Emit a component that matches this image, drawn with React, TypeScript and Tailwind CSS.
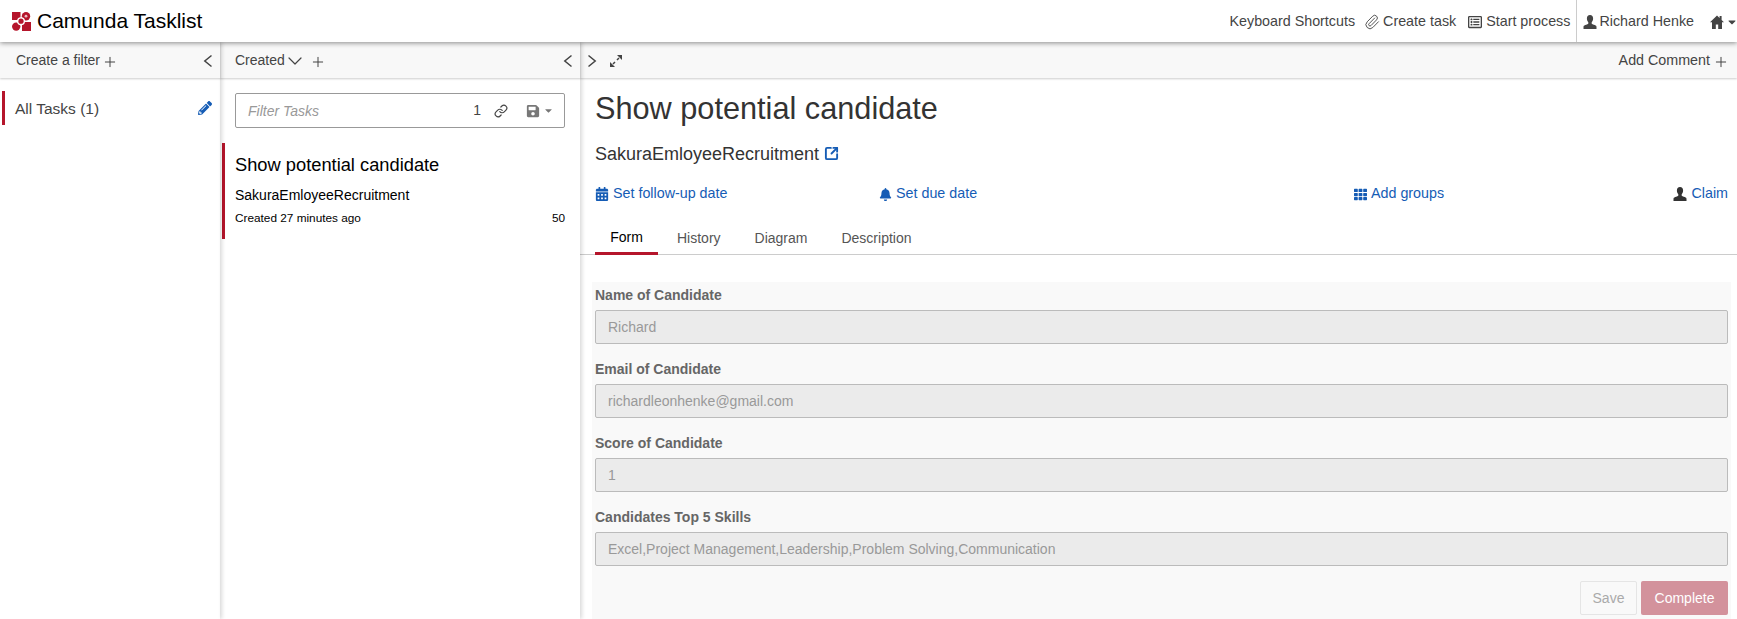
import { ChevronDown, Link, Paperclip, Plus, SquareArrowOutUpRight } from 'lucide-react'
import { FaBell, FaCalendarAlt, FaCaretDown, FaPencilAlt, FaRegListAlt, FaSave, FaTh } from 'react-icons/fa'

const fields = [
  { label: 'Name of Candidate', value: 'Richard' },
  { label: 'Email of Candidate', value: 'richardleonhenke@gmail.com' },
  { label: 'Score of Candidate', value: '1' },
  { label: 'Candidates Top 5 Skills', value: 'Excel,Project Management,Leadership,Problem Solving,Communication' },
]

function Logo() {
  return (
    <svg width="19" height="19" viewBox="0 0 19 19" className="shrink-0">
      <path d="M0 0 H8.5 V8 H0 Z" fill="#b5152b" />
      <circle cx="14" cy="4.2" r="4.2" fill="#b5152b" />
      <circle cx="14" cy="4.2" r="1.4" fill="#e9b9c0" />
      <circle cx="4.2" cy="14.6" r="4.2" fill="#b5152b" />
      <path d="M10 10 H19 V19 H10 Z" fill="#b5152b" />
      <circle cx="9" cy="9.2" r="4" fill="#fff" />
      <circle cx="9" cy="9.2" r="2.6" fill="#b5152b" />
    </svg>
  )
}

// bust icon, same shape in the nav and next to Claim
function UserIcon({ className = '' }: { className?: string }) {
  return (
    <svg width="14" height="14" viewBox="0 0 14 14" fill="currentColor" className={`shrink-0 ${className}`}>
      <path d="M7 0 C4.9 0 3.9 1.5 3.9 3.4 C3.9 5.2 4.6 6.4 5.3 7.2 V8.4 C5.3 9 3.6 9.4 2.2 10 C1 10.5 0.5 11 0.5 12 V14 H13.5 V12 C13.5 11 13 10.5 11.8 10 C10.4 9.4 8.7 9 8.7 8.4 V7.2 C9.4 6.4 10.1 5.2 10.1 3.4 C10.1 1.5 9.1 0 7 0 Z" />
    </svg>
  )
}

function HomeIcon() {
  return (
    <svg width="14" height="14" viewBox="0 0 14 14" fill="currentColor" className="shrink-0">
      <path d="M7 0.5 L0 7.2 H2 V14 H5.8 V9.5 H8.2 V14 H12 V7.2 H14 L11.6 4.9 V1 H9.6 V3 Z" />
    </svg>
  )
}

function ExpandIcon() {
  return (
    <svg width="14" height="14" viewBox="0 0 14 14" fill="#444" stroke="none" className="shrink-0">
      <path d="M8 1 H13 V6 Z" />
      <path d="M1 8 V13 H6 Z" />
      <path d="M10 4 L8 6 M4 10 L6 8" stroke="#444" strokeWidth="1.5" />
    </svg>
  )
}

function Chevron({ dir }: { dir: 'left' | 'right' }) {
  return (
    <svg width="10" height="14" viewBox="0 0 10 14" fill="none" stroke="#444" strokeWidth="1.5" className="mt-[2px] shrink-0">
      <path d={dir === 'left' ? 'M8.5 1.5 L1.8 7 L8.5 12.5' : 'M1.5 1.5 L8.2 7 L1.5 12.5'} />
    </svg>
  )
}

function SubHeader({ children, className = '' }: { children: React.ReactNode; className?: string }) {
  return (
    <div className={`flex h-[36px] shrink-0 items-center bg-[#f8f8f8] text-[14px] text-[#444] shadow-[0_1px_2px_rgba(0,0,0,0.2)] ${className}`}>
      {children}
    </div>
  )
}

function ActionLink({ icon, children, className = '' }: { icon: React.ReactNode; children: React.ReactNode; className?: string }) {
  return (
    <span className={`flex items-center gap-[4px] text-[14.3px] text-[#155cb5] ${className}`}>
      {icon}
      {children}
    </span>
  )
}

export default function App() {
  return (
    <div className="flex h-screen flex-col overflow-hidden bg-white font-['Liberation_Sans',Arial,sans-serif] text-[#333]">
      <header className="relative z-20 flex h-[42px] shrink-0 items-center bg-white pl-[12px] shadow-[0_1px_5px_rgba(0,0,0,0.45)]">
        <Logo />
        <span className="ml-[6px] text-[21px] text-black">Camunda Tasklist</span>
        <nav className="ml-auto flex h-full items-center text-[14.3px] text-[#444]">
          <span className="mt-[2px]">Keyboard Shortcuts</span>
          <span className="ml-[9px] mt-[2px] flex items-center gap-[3px]">
            <Paperclip size={16} strokeWidth={1.5} className="text-[#555]" />
            Create task
          </span>
          <span className="ml-[12px] mt-[2px] flex items-center gap-[4px]">
            <FaRegListAlt size={14} />
            Start process
          </span>
          <span className="ml-[6px] flex h-full items-center gap-[2px] border-l border-[#ccc] pl-[6px] pt-[2px]">
            <UserIcon />
            Richard Henke
          </span>
          <span className="ml-[16px] mr-[-1px] mt-[2px] flex items-center gap-[2px]">
            <HomeIcon />
            <FaCaretDown size={12} />
          </span>
        </nav>
      </header>

      <div className="flex min-h-0 flex-1">
        <aside className="relative z-10 flex w-[220px] shrink-0 flex-col shadow-[2px_0_4px_rgba(0,0,0,0.15)]">
          <SubHeader className="pl-[16px] pr-[7px]">
            <span className="mt-[1px]">Create a filter</span>
            <Plus size={16} strokeWidth={1.5} className="ml-[2px] mt-[3px]" />
            <span className="ml-auto">
              <Chevron dir="left" />
            </span>
          </SubHeader>
          <div className="ml-[2px] mt-[13px] flex h-[34px] items-center justify-between border-l-[3px] border-[#b5152b] pl-[10px] pr-[8px]">
            <span className="mt-[1px] text-[15.5px] text-[#444]">All Tasks (1)</span>
            <FaPencilAlt size={14} className="text-[#155cb5]" />
          </div>
        </aside>

        <section className="relative z-[5] flex w-[360px] shrink-0 flex-col shadow-[2px_0_4px_rgba(0,0,0,0.15)]">
          <SubHeader className="pl-[15px] pr-[7px]">
            <span className="mt-[1px]">Created</span>
            <ChevronDown size={24} strokeWidth={1.2} className="ml-[-2px] mt-[2px]" />
            <Plus size={16} strokeWidth={1.5} className="ml-[3px] mt-[3px]" />
            <span className="ml-auto">
              <Chevron dir="left" />
            </span>
          </SubHeader>
          <div className="mx-[15px] mt-[15px] flex h-[35px] shrink-0 items-center rounded-[2px] border border-[#999] pl-[12px] pr-[10px] text-[14px]">
            <span className="mt-[1px] italic text-[#999]">Filter Tasks</span>
            <span className="ml-auto text-[#444]">1</span>
            <Link size={14} strokeWidth={2} className="ml-[13px] text-[#444]" />
            <FaSave size={14} className="ml-[18px] text-[#777]" />
            <FaCaretDown size={11} className="ml-[3px] text-[#777]" />
          </div>
          <div className="ml-[2px] mt-[15px] flex h-[96px] shrink-0 flex-col border-l-[3px] border-[#b5152b] pl-[10px] pr-[15px] pt-[10px] text-black">
            <div className="text-[18.3px] leading-[24px]">Show potential candidate</div>
            <div className="mt-[8px] text-[14px] leading-[20px]">SakuraEmloyeeRecruitment</div>
            <div className="mt-[5px] flex justify-between text-[11.8px] leading-[17px]">
              <span>Created 27 minutes ago</span>
              <span>50</span>
            </div>
          </div>
        </section>

        <main className="flex min-w-0 flex-1 flex-col">
          <SubHeader className="pl-[7px] pr-[8px]">
            <Chevron dir="right" />
            <span className="ml-[12px] mt-[1px]">
              <ExpandIcon />
            </span>
            <span className="ml-auto mt-[2px] text-[14.3px]">Add Comment</span>
            <Plus size={16} strokeWidth={1.5} className="ml-[3px] mt-[3px]" />
          </SubHeader>

          <div className="flex min-h-0 flex-1 flex-col">
            <div className="px-[15px]">
              <h1 className="mt-[13px] text-[30.7px] leading-[36px] text-[#333]">Show potential candidate</h1>
              <div className="mt-[15px] flex items-center gap-[5px] text-[18px] leading-[24px]">
                SakuraEmloyeeRecruitment
                <SquareArrowOutUpRight size={15} strokeWidth={3} className="mb-[1px] text-[#155cb5]" />
              </div>
              <div className="mt-[18px] flex h-[20px] items-center">
                <ActionLink icon={<FaCalendarAlt size={14} />} className="w-[284px]">Set follow-up date</ActionLink>
                <ActionLink icon={<FaBell size={13} />} className="w-[475px]">Set due date</ActionLink>
                <ActionLink icon={<FaTh size={13} />}>Add groups</ActionLink>
                <ActionLink icon={<UserIcon className="text-[#333]" />} className="ml-auto mr-[-6px]">Claim</ActionLink>
              </div>
            </div>

            <div className="mt-[18px] flex h-[33px] shrink-0 items-start border-b border-[#ccc] pl-[15px] text-[14px] text-[#555]">
              <span className="flex h-[33px] w-[63px] items-center justify-center border-b-[3px] border-[#b5152b] pt-[1px] text-black">Form</span>
              <span className="ml-[19px] pt-[6px]">History</span>
              <span className="ml-[34px] pt-[6px]">Diagram</span>
              <span className="ml-[34px] pt-[6px]">Description</span>
            </div>

            <form className="ml-[12px] mr-[6px] mt-[27px] flex flex-1 flex-col bg-[#f9f9f9] px-[3px] pt-[3px]">
              <div className="flex flex-col gap-[15px]">
                {fields.map((f) => (
                  <div key={f.label} className="flex flex-col">
                    <label className="text-[14px] font-bold leading-[20px] text-[#666]">{f.label}</label>
                    <div className="mt-[5px] flex h-[34px] items-center rounded-[2px] border border-[#bbb] bg-[#ebebeb] px-[12px] text-[14px] text-[#999]">
                      {f.value}
                    </div>
                  </div>
                ))}
              </div>
              <div className="mt-[15px] flex justify-end gap-[4px]">
                <button type="button" className="h-[34px] w-[57px] rounded-[2px] border border-[#e5e5e5] bg-[#f9f9f9] text-[14px] text-[#aaa]">Save</button>
                <button type="button" className="h-[34px] w-[87px] rounded-[2px] bg-[#d3929c] text-[14px] text-white">Complete</button>
              </div>
            </form>
          </div>
        </main>
      </div>
    </div>
  )
}
